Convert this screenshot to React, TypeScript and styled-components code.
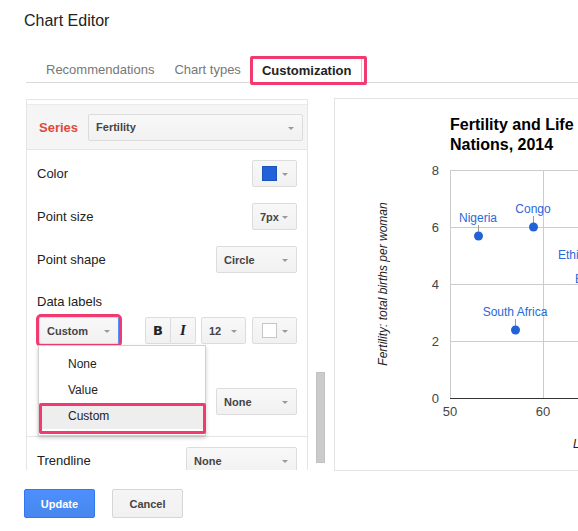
import React from 'react'
import styled, { createGlobalStyle } from 'styled-components'

const PINK = '#f03a70'

const GlobalStyle = createGlobalStyle`
  html, body {
    margin: 0;
    padding: 0;
    background: #fff;
  }
  body {
    font-family: 'Liberation Sans', Arial, sans-serif;
    color: #222;
  }
`

const Page = styled.div`
  width: 578px;
  height: 531px;
  overflow: hidden;
  box-sizing: border-box;
  padding: 11px 0 0 24px;
`

const Title = styled.h1`
  margin: 0;
  font-size: 16px;
  font-weight: normal;
  line-height: 20px;
  color: #222;
`

const TabBar = styled.div`
  display: flex;
  align-items: flex-start;
  height: 26px;
  margin: 25px 0 0 2px;
  padding-left: 10px;
  border-bottom: 1px solid #d9d9d9;
`

const Tab = styled.div<{ $active?: boolean }>`
  position: relative;
  box-sizing: border-box;
  padding: 2px 10px 0;
  height: ${(p) => (p.$active ? '27px' : '26px')};
  line-height: ${(p) => (p.$active ? '24px' : '24px')};
  font-size: 13px;
  color: ${(p) => (p.$active ? '#222' : '#777')};
  font-weight: ${(p) => (p.$active ? 'bold' : 'normal')};
  background: #fff;
  border: ${(p) => (p.$active ? '1px solid #ccc' : 'none')};
  border-bottom: none;

  ${(p) =>
    p.$active &&
    `
    &::after {
      content: '';
      position: absolute;
      top: -1px;
      left: -2px;
      right: -6px;
      bottom: -2px;
      border: 3px solid ${PINK};
      border-radius: 2px;
    }
  `}
`

const Body = styled.div`
  display: flex;
  align-items: flex-start;
  height: 373px;
  margin: 15px 0 0 2px;
`

const SidePanel = styled.div`
  flex: none;
  width: 282px;
  height: 371px;
  margin-top: 1px;
  box-sizing: border-box;
  border: 1px solid #e5e5e5;
  border-bottom: none;
  padding-top: 4px;
  overflow: hidden;
`

const SeriesHeader = styled.div`
  display: flex;
  align-items: center;
  gap: 10px;
  box-sizing: border-box;
  height: 46px;
  padding: 0 4px 0 12px;
  background: #f5f5f5;
  border-top: 1px solid #ebebeb;
  border-bottom: 1px solid #e5e5e5;
`

const SeriesLabel = styled.span`
  font-size: 13px;
  font-weight: bold;
  color: #dd4b39;
`

const Section = styled.div<{ $last?: boolean }>`
  display: flex;
  flex-direction: column;
  gap: 16px;
  padding: ${(p) => (p.$last ? '10px 10px' : '10px 10px 21px')};
  border-bottom: ${(p) => (p.$last ? 'none' : '1px solid #e5e5e5')};
`

const Row = styled.div<{ $offset?: number }>`
  display: flex;
  align-items: center;
  justify-content: space-between;
  height: 27px;
  margin-top: ${(p) => p.$offset ?? 0}px;
`

const Label = styled.span`
  font-size: 13px;
  line-height: 16px;
  color: #222;
`

const Block = styled.div`
  display: flex;
  flex-direction: column;
  gap: 7px;
  margin-top: 5px;
`

const Select = styled.div<{ $width?: number; $grow?: boolean; $focus?: boolean }>`
  position: relative;
  display: flex;
  align-items: center;
  box-sizing: border-box;
  height: 27px;
  width: ${(p) => (p.$width ? `${p.$width}px` : 'auto')};
  flex: ${(p) => (p.$grow ? '1' : 'none')};
  padding: 0 7px;
  border: 1px solid #dcdcdc;
  border-right-color: ${(p) => (p.$focus ? '#4d90fe' : '#dcdcdc')};
  border-radius: 2px;
  background: linear-gradient(#f8f8f8, #f1f1f1);
  font-size: 11px;
  font-weight: bold;
  color: #444;
  outline: ${(p) => (p.$focus ? `3px solid ${PINK}` : 'none')};

  &::after {
    content: '';
    position: absolute;
    right: 8px;
    top: 12px;
    border-left: 3px solid transparent;
    border-right: 3px solid transparent;
    border-top: 3px solid #999;
  }
`

const Swatch = styled.span<{ $color: string }>`
  width: 15px;
  height: 15px;
  margin-left: 2px;
  box-sizing: border-box;
  background: ${(p) => p.$color};
  border: 1px solid ${(p) => (p.$color === '#fff' ? '#c6c6c6' : '#1b54b8')};
`

const ControlRow = styled.div`
  display: flex;
  align-items: center;
  height: 27px;
`

const DropWrap = styled.div`
  position: relative;
  margin-left: 2px;
`

const RightGroup = styled.div`
  display: flex;
  align-items: center;
  gap: 5px;
  margin-left: auto;

  & > :last-child {
    margin-left: 1px;
  }
`

const ToggleGroup = styled.div`
  display: flex;
`

const Toggle = styled.div<{ $italic?: boolean }>`
  display: flex;
  align-items: center;
  justify-content: center;
  box-sizing: border-box;
  width: ${(p) => (p.$italic ? 25 : 26)}px;
  height: 27px;
  border: 1px solid #dcdcdc;
  border-left-width: ${(p) => (p.$italic ? 0 : 1)}px;
  border-radius: ${(p) => (p.$italic ? '0 2px 2px 0' : '2px 0 0 2px')};
  background: linear-gradient(#f8f8f8, #f1f1f1);
  font-family: ${(p) => (p.$italic ? "'Liberation Serif', serif" : "'DejaVu Sans', 'Liberation Sans', sans-serif")};
  font-style: ${(p) => (p.$italic ? 'italic' : 'normal')};
  font-weight: bold;
  font-size: ${(p) => (p.$italic ? 15 : 13)}px;
  color: #222;
`

const Menu = styled.div`
  position: absolute;
  z-index: 5;
  top: 28px;
  left: -1px;
  width: 168px;
  box-sizing: border-box;
  padding: 5px 0 6px;
  background: #fff;
  border: 1px solid rgba(0, 0, 0, 0.18);
  box-shadow: 0 2px 4px rgba(0, 0, 0, 0.2);
`

const MenuItem = styled.div<{ $active?: boolean }>`
  position: relative;
  height: 26px;
  line-height: 26px;
  padding-left: 29px;
  font-size: 12px;
  color: #222;
  background: ${(p) => (p.$active ? '#eee' : 'transparent')};

  ${(p) =>
    p.$active &&
    `
    &::after {
      content: '';
      position: absolute;
      top: 0;
      left: 0;
      right: -1px;
      bottom: -5px;
      border: 3px solid ${PINK};
      border-radius: 2px;
    }
  `}
`

const ScrollColumn = styled.div`
  flex: none;
  width: 26px;
  height: 373px;
`

const Thumb = styled.div`
  width: 9px;
  height: 91px;
  margin: 274px 0 0 8px;
  box-sizing: border-box;
  background: #cbcbcb;
  border: 1px solid #c2c2c2;
`

const ChartPanel = styled.div`
  flex: none;
  width: 430px;
  height: 373px;
  box-sizing: border-box;
  border: 1px solid #e3e3e3;
`

const Footer = styled.div`
  display: flex;
  gap: 17px;
  margin-top: 18px;
`

const Button = styled.button<{ $primary?: boolean }>`
  width: 71px;
  height: 29px;
  padding: 0;
  border-radius: 2px;
  font-family: 'Liberation Sans', Arial, sans-serif;
  font-size: 11px;
  font-weight: bold;
  color: ${(p) => (p.$primary ? '#fff' : '#444')};
  border: 1px solid ${(p) => (p.$primary ? '#3079ed' : '#d6d6d6')};
  background: ${(p) =>
    p.$primary ? 'linear-gradient(#4d90fe, #4787ed)' : 'linear-gradient(#f5f5f5, #f1f1f1)'};
`

const POINT = '#2262d8'
const LABEL = '#2b68d8'

const points = [
  { name: 'Nigeria', x: 143, y: 137 },
  { name: 'Congo', x: 198, y: 128 },
  { name: 'South Africa', x: 180, y: 231 },
]

const yTicks = [
  { v: '8', y: 71 },
  { v: '6', y: 128 },
  { v: '4', y: 185 },
  { v: '2', y: 242 },
]

const Chart = () => (
  <svg width="428" height="371" fontFamily="'Liberation Sans', Arial, sans-serif">
    <text x="115" y="31" fontSize="16" fontWeight="bold" fill="#000">
      Fertility and Life Expectancy in Selected
    </text>
    <text x="115" y="51" fontSize="16" fontWeight="bold" fill="#000">
      Nations, 2014
    </text>

    {yTicks.map((t) => (
      <line key={t.v} x1="115" x2="428" y1={t.y + 0.5} y2={t.y + 0.5} stroke="#ccc" />
    ))}
    {[115, 208, 301].map((x) => (
      <line key={x} x1={x + 0.5} x2={x + 0.5} y1="71" y2="299" stroke="#ccc" />
    ))}
    <line x1="115" x2="428" y1="299.5" y2="299.5" stroke="#333" />

    {[...yTicks, { v: '0', y: 299 }].map((t) => (
      <text key={t.v} x="104" y={t.y + 5} fontSize="13" fill="#444" textAnchor="end">
        {t.v}
      </text>
    ))}
    <text x="115" y="317" fontSize="13" fill="#444" textAnchor="middle">50</text>
    <text x="208" y="317" fontSize="13" fill="#444" textAnchor="middle">60</text>

    {points.map((p) => (
      <g key={p.name}>
        <line x1={p.x + 0.5} x2={p.x + 0.5} y1={p.y - 11} y2={p.y - 4} stroke="#999" />
        <circle cx={p.x + 0.5} cy={p.y} r="4.5" fill={POINT} />
        <text x={p.x} y={p.y - 14} fontSize="12" fill={LABEL} textAnchor="middle">
          {p.name}
        </text>
      </g>
    ))}
    <text x="223" y="160" fontSize="12" fill={LABEL}>Ethiopia</text>
    <text x="240" y="184" fontSize="12" fill={LABEL}>Egypt</text>

    <text
      transform="translate(52,185) rotate(-90)"
      fontSize="12"
      fontStyle="italic"
      fill="#222"
      textAnchor="middle"
    >
      Fertility: total births per woman
    </text>
    <text x="238" y="349" fontSize="12" fontStyle="italic" fill="#222">
      Life expectancy (years)
    </text>
  </svg>
)

const App = () => (
  <Page>
    <GlobalStyle />
    <Title>Chart Editor</Title>
    <TabBar>
      <Tab>Recommendations</Tab>
      <Tab>Chart types</Tab>
      <Tab $active>Customization</Tab>
    </TabBar>

    <Body>
      <SidePanel>
        <SeriesHeader>
          <SeriesLabel>Series</SeriesLabel>
          <Select $grow>Fertility</Select>
        </SeriesHeader>

        <Section>
          <Row>
            <Label>Color</Label>
            <Select $width={45}>
              <Swatch $color="#2262d8" />
            </Select>
          </Row>
          <Row>
            <Label>Point size</Label>
            <Select $width={45}>7px</Select>
          </Row>
          <Row>
            <Label>Point shape</Label>
            <Select $width={81}>Circle</Select>
          </Row>
          <Block>
            <Label>Data labels</Label>
            <ControlRow>
              <DropWrap>
                <Select $width={80} $focus>Custom</Select>
                <Menu>
                  <MenuItem>None</MenuItem>
                  <MenuItem>Value</MenuItem>
                  <MenuItem $active>Custom</MenuItem>
                </Menu>
              </DropWrap>
              <RightGroup>
                <ToggleGroup>
                  <Toggle>B</Toggle>
                  <Toggle $italic>I</Toggle>
                </ToggleGroup>
                <Select $width={45}>12</Select>
                <Select $width={45}>
                  <Swatch $color="#fff" />
                </Select>
              </RightGroup>
            </ControlRow>
          </Block>
          <Row $offset={28}>
            <span />
            <Select $width={81}>None</Select>
          </Row>
        </Section>

        <Section $last>
          <Row>
            <Label>Trendline</Label>
            <Select $width={111}>None</Select>
          </Row>
        </Section>
      </SidePanel>

      <ScrollColumn>
        <Thumb />
      </ScrollColumn>

      <ChartPanel>
        <Chart />
      </ChartPanel>
    </Body>

    <Footer>
      <Button $primary>Update</Button>
      <Button>Cancel</Button>
    </Footer>
  </Page>
)

export default App
